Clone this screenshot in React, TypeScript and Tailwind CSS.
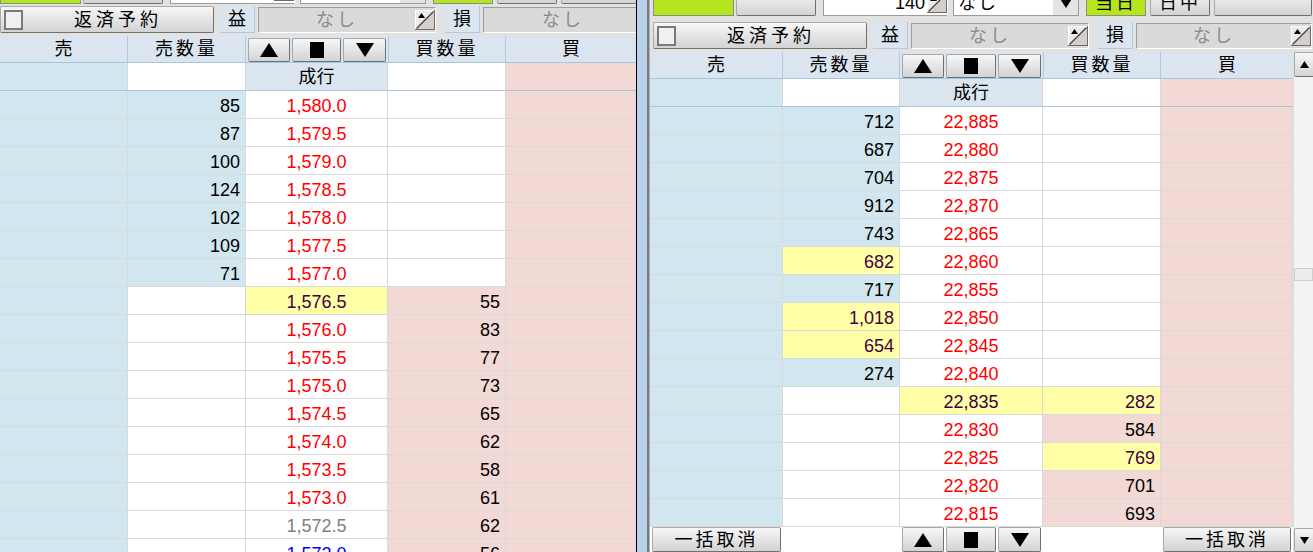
import React from 'react';
import clsx from 'clsx';

type Side = 'sell' | 'buy';
type Tone = 'red' | 'gray' | 'blue';

interface Row {
  side: Side;
  qty: string;
  price: string;
  tone?: Tone;
  hiQty?: boolean;
  hiPrice?: boolean;
}

// 左の板
const leftRows: Row[] = [
  { side: 'sell', qty: '85', price: '1,580.0' },
  { side: 'sell', qty: '87', price: '1,579.5' },
  { side: 'sell', qty: '100', price: '1,579.0' },
  { side: 'sell', qty: '124', price: '1,578.5' },
  { side: 'sell', qty: '102', price: '1,578.0' },
  { side: 'sell', qty: '109', price: '1,577.5' },
  { side: 'sell', qty: '71', price: '1,577.0' },
  { side: 'buy', qty: '55', price: '1,576.5', hiPrice: true },
  { side: 'buy', qty: '83', price: '1,576.0' },
  { side: 'buy', qty: '77', price: '1,575.5' },
  { side: 'buy', qty: '73', price: '1,575.0' },
  { side: 'buy', qty: '65', price: '1,574.5' },
  { side: 'buy', qty: '62', price: '1,574.0' },
  { side: 'buy', qty: '58', price: '1,573.5' },
  { side: 'buy', qty: '61', price: '1,573.0' },
  { side: 'buy', qty: '62', price: '1,572.5', tone: 'gray' },
  { side: 'buy', qty: '56', price: '1,572.0', tone: 'blue' },
];

// 右の板
const rightRows: Row[] = [
  { side: 'sell', qty: '712', price: '22,885' },
  { side: 'sell', qty: '687', price: '22,880' },
  { side: 'sell', qty: '704', price: '22,875' },
  { side: 'sell', qty: '912', price: '22,870' },
  { side: 'sell', qty: '743', price: '22,865' },
  { side: 'sell', qty: '682', price: '22,860', hiQty: true },
  { side: 'sell', qty: '717', price: '22,855' },
  { side: 'sell', qty: '1,018', price: '22,850', hiQty: true },
  { side: 'sell', qty: '654', price: '22,845', hiQty: true },
  { side: 'sell', qty: '274', price: '22,840' },
  { side: 'buy', qty: '282', price: '22,835', hiPrice: true, hiQty: true },
  { side: 'buy', qty: '584', price: '22,830' },
  { side: 'buy', qty: '769', price: '22,825', hiQty: true },
  { side: 'buy', qty: '701', price: '22,820' },
  { side: 'buy', qty: '693', price: '22,815' },
];

const toneClass: Record<Tone, string> = {
  red: 'text-[#ff0000]',
  gray: 'text-[#808080]',
  blue: 'text-[#0000ff]',
};

const Btn: React.FC<{ className?: string; children?: React.ReactNode }> = ({ className, children }) => (
  <div
    className={clsx(
      'flex items-center justify-center shrink-0 rounded-[2px] border border-[#a8a8a8] border-r-[#707070] border-b-[#707070] bg-linear-to-b from-[#f7f7f7] to-[#d3d3d3]',
      className
    )}
  >
    {children}
  </div>
);

const Up = ({ w = 18, h = 14 }: { w?: number; h?: number }) => (
  <svg width={w} height={h} viewBox="0 0 18 14">
    <path d="M9 0 L18 14 L0 14 Z" fill="#000" />
  </svg>
);

const Down = ({ w = 18, h = 14 }: { w?: number; h?: number }) => (
  <svg width={w} height={h} viewBox="0 0 18 14">
    <path d="M0 0 L18 0 L9 14 Z" fill="#000" />
  </svg>
);

const Stop = () => (
  <svg width="14" height="16" viewBox="0 0 14 16">
    <rect x="0" y="0" width="14" height="16" fill="#000" />
  </svg>
);

// 入力欄の右端にある小さなスピンアイコン
const SpinIcon = () => (
  <svg width="20" height="20" viewBox="0 0 20 20" className="shrink-0">
    <rect x="0" y="0" width="20" height="20" fill="#d4d0c8" />
    <path d="M0 0 H20 L0 20 Z" fill="#ecebe8" />
    <path d="M0 0 H20 V1 H1 V20 H0 Z" fill="#ffffff" />
    <path d="M20 0 V20 H0 V19 H19 V0 Z" fill="#6b6b6b" />
    <line x1="1.5" y1="18.5" x2="18.5" y2="1.5" stroke="#404040" strokeWidth="1.2" />
    <path d="M3 8 L6.5 3 L10 8 Z" fill="#000" />
  </svg>
);

const NoneBox: React.FC<{ className?: string; icon?: boolean }> = ({ className, icon = true }) => (
  <div className={clsx('h-[26px] flex items-center bg-[#dadada] border border-[#9c9c9c] border-r-white border-b-white shrink-0', className)}>
    <span className="flex-1 text-center text-[#8a8a8a] tracking-[3px]">なし</span>
    {icon && <SpinIcon />}
  </div>
);

const Label: React.FC<{ children: React.ReactNode }> = ({ children }) => (
  <div className="w-[35px] h-[27px] shrink-0 flex items-center justify-center bg-[#dbe5f0] border-r border-b border-[#b4c9de]">
    {children}
  </div>
);

// 一番上の（半分隠れた）行
const TopRow: React.FC<{ h: string; pad: string; text?: boolean }> = ({ h, pad, text = true }) => (
  <div className={clsx('flex items-end overflow-hidden shrink-0', h, pad)}>
    <div className="w-[81px] h-[26px] shrink-0 bg-[#b5e61d] border border-[#8c8c8c]" />
    <Btn className="w-[80px] h-[26px] ml-[2px]" />
    <div className="w-[125px] h-[26px] ml-[7px] shrink-0 flex items-center justify-end bg-white border border-[#9c9c9c] border-r-white">
      {text && <span className="mr-[2px]">140</span>}
      <SpinIcon />
    </div>
    <div className="w-[126px] h-[26px] ml-[5px] shrink-0 flex items-center bg-white border border-[#9c9c9c]">
      <span className="flex-1 pl-[4px] tracking-[2px]">{text ? 'なし' : ''}</span>
      <div className="w-[25px] h-[24px] flex items-center justify-center bg-[#e4e4e4]">
        <Down w={14} h={10} />
      </div>
    </div>
    <div className="w-[60px] h-[26px] ml-[7px] shrink-0 flex items-center justify-center bg-[#b5e61d] border border-[#8c8c8c] tracking-[3px]">
      {text ? '当日' : ''}
    </div>
    <Btn className="w-[60px] h-[26px] ml-[4px] tracking-[3px]">{text ? '日中' : ''}</Btn>
    <Btn className="w-[98px] h-[26px] ml-[4px]" />
  </div>
);

const Controls: React.FC<{ pad: string; lastIcon?: boolean }> = ({ pad, lastIcon = true }) => (
  <div className={clsx('flex items-center h-[27px] shrink-0', pad)}>
    <Btn className="w-[214px] h-[27px] justify-start">
      <div className="w-[19px] h-[20px] ml-[3px] bg-[#f0f0f0] border-2 border-[#7a7a7a] shrink-0" />
      <span className="flex-1 text-center tracking-[4px]">返済予約</span>
    </Btn>
    <div className="ml-[6px]">
      <Label>益</Label>
    </div>
    <NoneBox className="w-[178px] ml-[3px]" />
    <div className="ml-[9px]">
      <Label>損</Label>
    </div>
    <NoneBox className={clsx('ml-[3px]', lastIcon ? 'w-[176px]' : 'w-[160px]')} icon={lastIcon} />
  </div>
);

const ArrowButtons: React.FC<{ className?: string }> = ({ className }) => (
  <div className={clsx('flex items-stretch gap-[2px] px-[2px]', className)}>
    <Btn className="w-[42px]">
      <Up />
    </Btn>
    <Btn className="flex-1">
      <Stop />
    </Btn>
    <Btn className="w-[43px]">
      <Down />
    </Btn>
  </div>
);

const cell = 'h-[28px] flex items-center pt-[2px] border-r border-b border-[#d9d9d9]';

const DataRow: React.FC<{ r: Row; grid: string }> = ({ r, grid }) => {
  const hiText = 'text-[#400040]';
  const sellBg = r.side === 'sell' ? (r.hiQty ? 'bg-[#ffffa8]' : 'bg-[#d1e6ee]') : 'bg-white';
  const buyBg = r.side === 'buy' ? (r.hiQty ? 'bg-[#ffffa8]' : 'bg-[#f3d9d6]') : 'bg-white';
  const qtyText = r.hiQty ? hiText : 'text-black';
  return (
    <div className={clsx('grid shrink-0', grid)}>
      <div className={clsx(cell, 'bg-[#d1e6ee]')} />
      <div className={clsx(cell, sellBg, 'justify-end pr-[5px]', qtyText)}>{r.side === 'sell' ? r.qty : ''}</div>
      <div
        className={clsx(
          cell,
          'justify-center',
          r.hiPrice ? 'bg-[#ffffa8]' : 'bg-white',
          r.hiPrice ? hiText : toneClass[r.tone ?? 'red']
        )}
      >
        {r.price}
      </div>
      <div className={clsx(cell, buyBg, 'justify-end pr-[5px]', qtyText)}>{r.side === 'buy' ? r.qty : ''}</div>
      <div className={clsx(cell, 'bg-[#f3d9d6]')} />
    </div>
  );
};

const Board: React.FC<{ grid: string; rows: Row[] }> = ({ grid, rows }) => (
  <div className="flex flex-col">
    {/* 見出し */}
    <div className={clsx('grid h-[27px] shrink-0 bg-[#dbe5f0] border-b border-[#a9c4df]', grid)}>
      <div className="flex items-center justify-center border-r border-[#b3c9df]">売</div>
      <div className="flex items-center justify-center border-r border-[#b3c9df] tracking-[3px]">売数量</div>
      <ArrowButtons className="pt-[2px]" />
      <div className="flex items-center justify-center border-r border-l border-[#b3c9df] tracking-[3px]">買数量</div>
      <div className="flex items-center justify-center">買</div>
    </div>
    {/* 成行 */}
    <div className={clsx('grid h-[28px] shrink-0 border-b border-[#a9c4df]', grid)}>
      <div className="bg-[#d1e6ee] border-r border-[#d9d9d9]" />
      <div className="bg-white border-r border-[#d9d9d9]" />
      <div className="bg-[#dbe5f0] flex items-center justify-center border-r border-[#d9d9d9]">成行</div>
      <div className="bg-white border-r border-[#d9d9d9]" />
      <div className="bg-[#f3d9d6]" />
    </div>
    {rows.map((r, i) => (
      <DataRow key={i} r={r} grid={grid} />
    ))}
  </div>
);

const Scrollbar = () => (
  <div className="w-[20px] shrink-0 flex flex-col bg-[#f3f3f3] border-l border-[#e0e0e0]">
    <Btn className="h-[25px] w-[20px]">
      <Up w={11} h={7} />
    </Btn>
    <div className="h-[191px]" />
    <div className="h-[13px] bg-[#ececec] border border-[#cfcfcf]" />
    <div className="flex-1" />
    <Btn className="h-[24px] w-[20px]">
      <Down w={11} h={7} />
    </Btn>
  </div>
);

export default function App() {
  return (
    <div className="w-[1313px] h-[552px] overflow-hidden flex bg-[#e2e2e2] text-[18px] leading-none text-black font-['Liberation_Sans','Noto_Sans_CJK_JP',sans-serif]">
      {/* 左パネル */}
      <div className="w-[636px] shrink-0 overflow-hidden flex flex-col">
        <TopRow h="h-[4px]" pad="pl-0" text={false} />
        <div className="mt-[2px]">
          <Controls pad="pl-0" lastIcon={false} />
        </div>
        <div className="mt-[3px]">
          <Board grid="grid-cols-[128px_118px_142px_118px_130px]" rows={leftRows} />
        </div>
      </div>

      {/* 区切り */}
      <div className="w-[1px] shrink-0 bg-black" />
      <div className="w-[10px] shrink-0 bg-[#b9d1ea]" />
      <div className="w-[2px] shrink-0 bg-[#7a7a7a]" />
      <div className="w-[1px] shrink-0 bg-[#b0b0b0]" />

      {/* 右パネル */}
      <div className="w-[663px] shrink-0 flex flex-col overflow-hidden">
        <TopRow h="h-[16px]" pad="pl-[3px]" />
        <div className="mt-[6px]">
          <Controls pad="pl-[3px]" />
        </div>
        <div className="mt-[3px] flex flex-1 min-h-0">
          <div className="w-[643px] shrink-0 flex flex-col">
            <Board grid="grid-cols-[133px_117px_143px_118px_132px]" rows={rightRows} />
            <div className="flex h-[25px] shrink-0 bg-white">
              <div className="w-[133px] px-[2px] flex">
                <Btn className="flex-1 tracking-[3px]">一括取消</Btn>
              </div>
              <div className="w-[117px]" />
              <ArrowButtons className="w-[143px]" />
              <div className="w-[118px]" />
              <div className="w-[132px] px-[2px] flex">
                <Btn className="flex-1 tracking-[3px]">一括取消</Btn>
              </div>
            </div>
          </div>
          <Scrollbar />
        </div>
      </div>
    </div>
  );
}
